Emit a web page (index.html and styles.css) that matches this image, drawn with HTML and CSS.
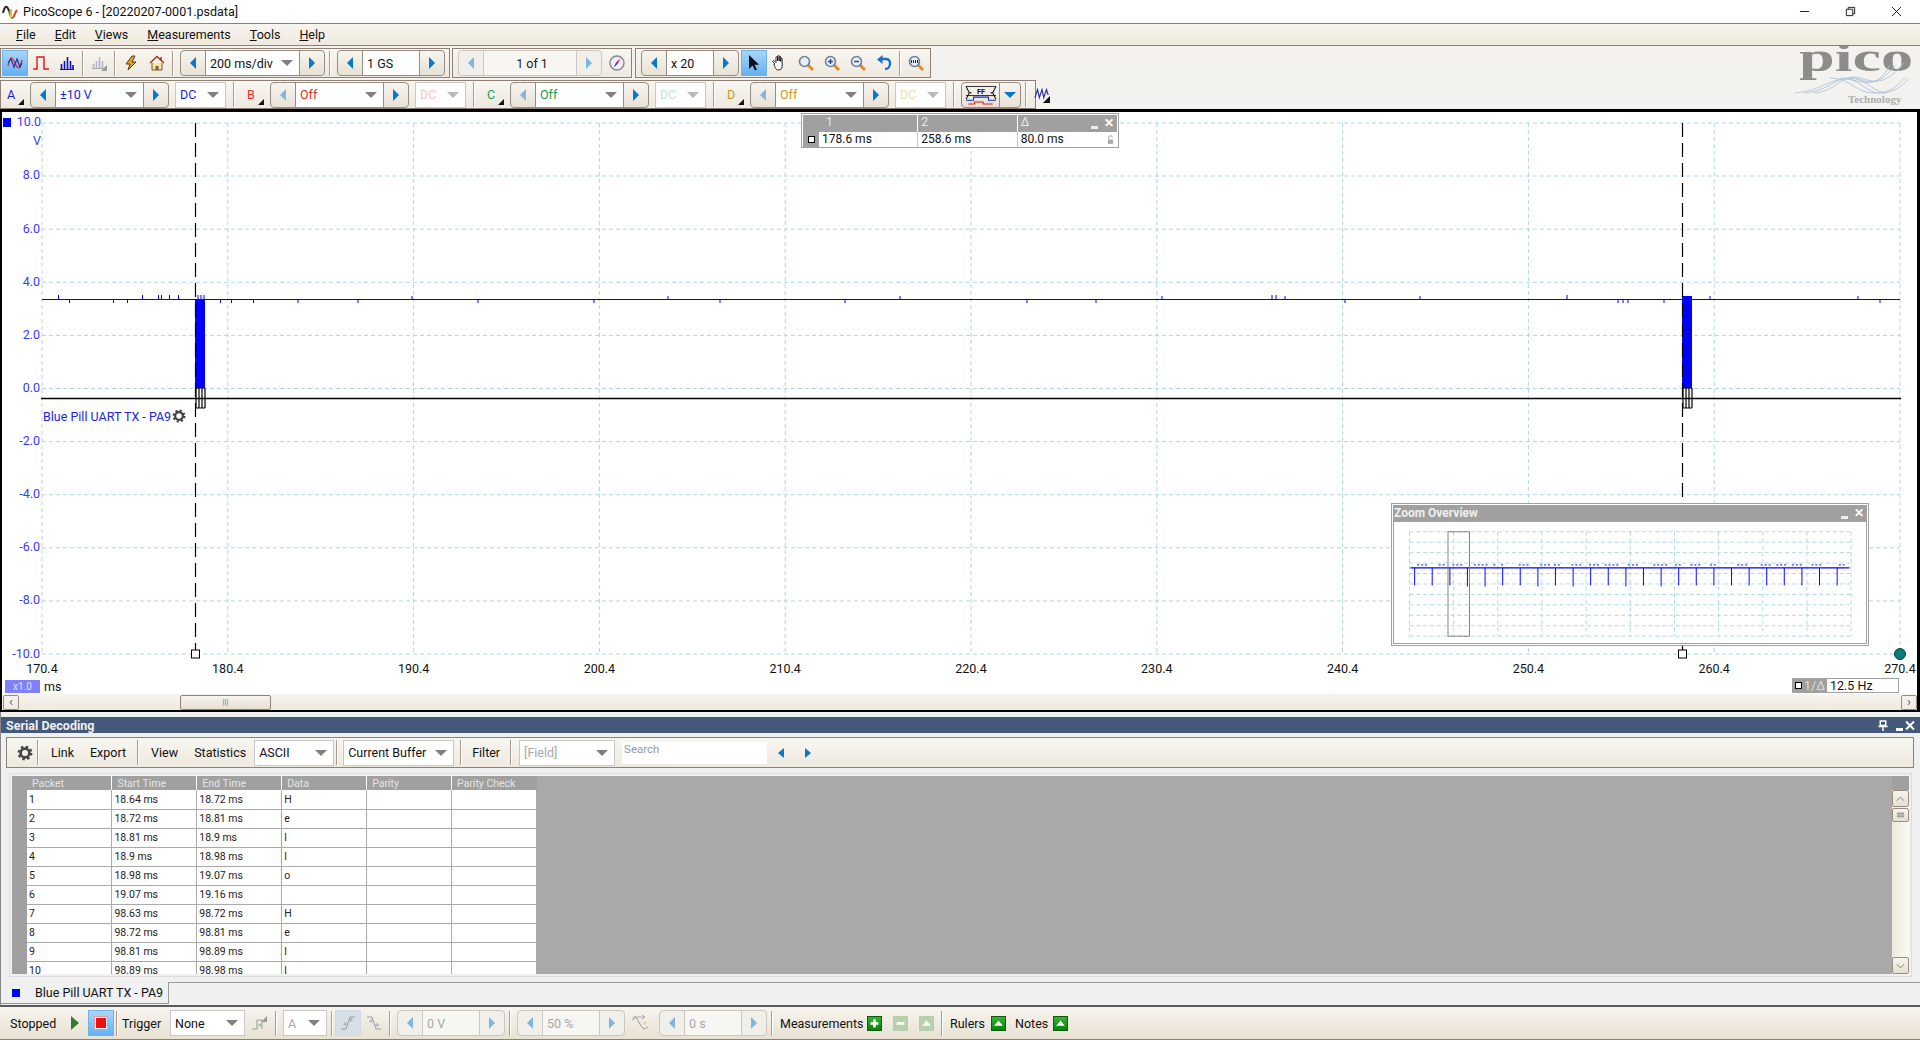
FILE: index.html
```html
<!DOCTYPE html>
<html lang="en">
<head>
  <meta charset="UTF-8">
  <title>PicoScope 6 - [20220207-0001.psdata]</title>
  <link rel="stylesheet" href="styles.css">
</head>
<body>
  <svg class="defs" width="0" height="0">
    <symbol id="gear" viewBox="0 0 16 16">
      <circle cx="8" cy="8" r="4.4" fill="none" stroke="#444" stroke-width="2.6"/>
      <circle cx="8" cy="8" r="6.2" fill="none" stroke="#444" stroke-width="2.4" stroke-dasharray="2.4 2.47"/>
    </symbol>
    <symbol id="lens" viewBox="0 0 16 16">
      <path d="M10 10l5 5" stroke="#e08a2c" stroke-width="3"/>
      <circle cx="6.5" cy="6.5" r="5" fill="#e6eef8" stroke="#6f7f96" stroke-width="1.6"/>
    </symbol>
  </svg>

  <div class="titlebar">
    <svg class="app-icon" viewBox="0 0 16 16"><path d="M1 9c2-8 4-8 6-2" fill="none" stroke="#222" stroke-width="2"/><path d="M7 7c2 7 3 8 4 6" fill="none" stroke="#2c9a34" stroke-width="2"/><path d="M11 13c2-1 2-5 4-7" fill="none" stroke="#d8432a" stroke-width="2"/><path d="M9 5v9" stroke="#e6c22c" stroke-width="2"/></svg>
    <span>PicoScope 6 - [20220207-0001.psdata]</span>
    <div class="winctl">
      <svg viewBox="0 0 12 12"><path d="M1 6h10" stroke="#111"/></svg>
      <svg viewBox="0 0 12 12"><path d="M1.5 3.5h7v7h-7zM3.5 3.5v-2h7v7h-2" fill="none" stroke="#111"/></svg>
      <svg viewBox="0 0 12 12"><path d="M1 1l10 10M11 1L1 11" stroke="#111"/></svg>
    </div>
  </div>

  <div class="menubar">
    <span><u>F</u>ile</span>
    <span><u>E</u>dit</span>
    <span><u>V</u>iews</span>
    <span><u>M</u>easurements</span>
    <span><u>T</u>ools</span>
    <span><u>H</u>elp</span>
  </div>

  <div class="bars">
    <div class="bars-left">
      <div class="row row-top">
        <div class="tb tb-a">
          <div class="btn active"><svg viewBox="0 0 16 16"><path d="M1 11C3 1 5 1 8 8s5 6 7-3" fill="none" stroke="#d8303a" stroke-width="1.4"/><path d="M1 8l3-4 3 8 3-8 3 8 2-4" fill="none" stroke="#2233aa" stroke-width="1.2"/></svg></div>
          <div class="btn"><svg viewBox="0 0 16 16"><path d="M0 14h4V2h7v12h5" fill="none" stroke="#e01818" stroke-width="1.4"/></svg></div>
          <div class="btn"><svg viewBox="0 0 16 16"><path d="M1 14.5h14" stroke="#101080"/><path d="M2.5 14V9M5.5 14V6M8.5 14V2M11.500 14V6M14 14V10" stroke="#1010c0" stroke-width="1.6"/></svg></div>
          <i class="sep"></i>
          <div class="btn"><svg viewBox="0 0 16 16"><path d="M1 13.500h13" stroke="#aaa"/><path d="M2.500 13V9M5.500 13V6M8.500 13V2M11.500 13V6" stroke="#b4b4cc" stroke-width="1.6"/><path d="M16 10v6h-6z" fill="#999"/></svg></div>
          <i class="sep"></i>
          <div class="btn"><svg viewBox="0 0 16 16"><path d="M9 1L3 9h4l-2 6 8-8H9l3-6z" fill="#e0a02a" stroke="#5a3d10"/></svg></div>
          <div class="btn"><svg viewBox="0 0 16 16"><path d="M3 8v7h10V8" fill="#f4e2a8" stroke="#6b5a2a"/><path d="M1 8l7-6.500L15 8" fill="none" stroke="#a8361c" stroke-width="1.6"/><path d="M6.500 15v-4h3v4" fill="#8a5a2a"/><path d="M12 2v3" stroke="#a8361c" stroke-width="1.600"/></svg></div>
          <i class="sep"></i>
          <div class="spin spin-wide"><b class="sb"><i class="al"></i></b><span class="val">200 ms/div<i class="caret"></i></span><b class="sb"><i class="ar"></i></b></div>
          <i class="sep"></i>
          <div class="spin spin-mid"><b class="sb"><i class="al"></i></b><span class="val">1 GS</span><b class="sb"><i class="ar"></i></b></div>
        </div>
        <div class="tb tb-b">
          <div class="spin spin-page off-look"><b class="sb"><i class="al faded"></i></b><span class="val center dark">1 of 1</span><b class="sb"><i class="ar faded"></i></b></div>
          <div class="btn"><svg viewBox="0 0 16 16"><circle cx="8" cy="8" r="7" fill="#eef" stroke="#888" stroke-width="1.400"/><path d="M11.500 3.500L8.800 8.800 7.200 7.200z" fill="#e02020"/><path d="M4.500 12.500l2.700-5.300 1.600 1.600z" fill="#2040c0"/></svg></div>
        </div>
        <div class="tb tb-c">
          <div class="spin spin-x"><b class="sb"><i class="al"></i></b><span class="val">x 20</span><b class="sb"><i class="ar"></i></b></div>
          <div class="btn active"><svg viewBox="0 0 16 16"><path d="M3 0v14l3.500-3.500 2.500 5 2-1-2.500-4.800H13z" fill="#111"/></svg></div>
          <div class="btn"><svg viewBox="0 0 16 16"><path d="M3 9L1 7c-.8-1 .6-2 1.500-1L4 7.500V2.500c0-1.200 1.500-1.200 1.500 0V6V1.500c0-1.200 1.600-1.200 1.600 0V6V2c0-1.200 1.600-1.200 1.600 0v4.500V4c0-1.200 1.500-1.200 1.500 0v7c0 2.500-1.500 4-4 4-2.300 0-3-2-4.200-6z" fill="#fff" stroke="#111" stroke-width=".9"/></svg></div>
          <div class="btn"><svg class="ic"><use href="#lens"/></svg></div>
          <div class="btn"><svg viewBox="0 0 16 16"><use href="#lens" width="16" height="16"/><path d="M4 6.500h5M6.500 4v5" stroke="#304a9c" stroke-width="1.500"/></svg></div>
          <div class="btn"><svg viewBox="0 0 16 16"><use href="#lens" width="16" height="16"/><path d="M4 6.500h5" stroke="#304a9c" stroke-width="1.500"/></svg></div>
          <div class="btn"><svg viewBox="0 0 16 16"><path d="M5 4h5c6 0 5 10-1 10" fill="none" stroke="#1c6fd0" stroke-width="2.400"/><path d="M6.500 0L1 4.500 6.500 9z" fill="#1c6fd0"/></svg></div>
          <i class="sep"></i>
          <div class="btn"><svg viewBox="0 0 16 16"><use href="#lens" width="16" height="16"/><path d="M3.500 5v3M5.500 5v3M7.500 5v3M9.500 5v3" stroke="#222"/></svg></div>
        </div>
      </div>
      <div class="row">
        <div class="tb tb-d">
          <div class="chan c-a">A<i class="corner"></i></div>
          <div class="spin spin-ch"><b class="sb"><i class="al"></i></b><span class="val c-a">±10 V<i class="caret"></i></span><b class="sb"><i class="ar"></i></b></div>
          <div class="sel sel-dc c-a">DC<i class="caret"></i></div>
          <i class="sep"></i>
          <div class="chan chan-pad c-b">B<i class="corner"></i></div>
          <div class="spin spin-ch"><b class="sb"><i class="al faded"></i></b><span class="val c-b">Off<i class="caret"></i></span><b class="sb"><i class="ar"></i></b></div>
          <div class="sel sel-dc c-b-off">DC<i class="caret faded"></i></div>
          <i class="sep"></i>
          <div class="chan chan-pad c-c">C<i class="corner"></i></div>
          <div class="spin spin-ch"><b class="sb"><i class="al faded"></i></b><span class="val c-c">Off<i class="caret"></i></span><b class="sb"><i class="ar"></i></b></div>
          <div class="sel sel-dc c-c-off">DC<i class="caret faded"></i></div>
          <i class="sep"></i>
          <div class="chan chan-pad c-d">D<i class="corner"></i></div>
          <div class="spin spin-ch"><b class="sb"><i class="al faded"></i></b><span class="val c-d">Off<i class="caret"></i></span><b class="sb"><i class="ar"></i></b></div>
          <div class="sel sel-dc c-d-off">DC<i class="caret faded"></i></div>
          <i class="sep"></i>
          <div class="spin spin-dig">
            <b class="sb sb-dig"><svg viewBox="0 0 30 18"><path d="M1 1l3 6-3 6M29 1l-3 6 3 6M4 7h2M24 7h2" fill="none" stroke="#111"/><path d="M1 1h28M1 9.500h28" stroke="#111" stroke-width=".8"/><text class="ff" x="15" y="8.500">FF</text><path d="M1 14h7v-3h14v3h7" fill="none" stroke="#1a2fd0"/><path d="M3 17.500h6v-2h8v2h9" fill="none" stroke="#e01818"/></svg></b>
            <b class="sb sb-drop"><i class="caret caret-blue"></i></b>
          </div>
          <i class="sep"></i>
          <div class="btn"><svg viewBox="0 0 18 18"><path d="M1 12L4 3l2 9 3-9 2 9 3-9 2 6" fill="none" stroke="#2a2aa0" stroke-width="1.300"/><path d="M18 10v8h-8z" fill="#111"/></svg></div>
        </div>
      </div>
    </div>
    <svg class="logo" viewBox="0 0 125 63">
      <text class="logo-pico" x="9" y="25" textLength="114" lengthAdjust="spacingAndGlyphs">pico</text>
      <g class="logo-waves">
        <path d="M5 47c25-2 35-14 50-14s30 14 45-14"/>
        <path d="M14 47c25-2 30-15 46-15s25 14 45-13"/>
        <path d="M24 47c22-2 26-16 40-16s25 16 50-14"/>
        <path d="M40 32c22 0 25 16 46 15s25-14 30-15"/>
        <path d="M50 32c22 0 25 16 42 15s25-13 27-15"/>
        <path d="M60 32c15 0 25 15 36 15"/>
      </g>
      <text class="logo-tech" x="58" y="57">Technology</text>
    </svg>
  </div>

  <div class="scope">
    <svg class="plot" viewBox="2 112 1915 582">
      <g class="grid">
        <path d="M42 123V654M227.800 123V654M413.600 123V654M599.400 123V654M785.200 123V654M971 123V654M1156.800 123V654M1342.600 123V654M1528.400 123V654M1714.200 123V654M1900 123V654"/>
        <path d="M42 123H1900M42 176H1900M42 229.200H1900M42 282.300H1900M42 335.400H1900M42 388.500H1900M42 441.600H1900M42 494.700H1900M42 547.800H1900M42 600.900H1900M42 654H1900"/>
      </g>
      <path class="baseline" d="M41 398.500H1901"/>
      <path class="trace" d="M42 299.500H1900"/>
      <path class="ticks" d="M58.500 295v4M142.500 295v4M158.500 295v4M161.500 295v4M169.500 295v4M178.500 295v4M198 295v4M201 295v4M204 295v4M69.500 300v3M113.500 300v3M127.500 300v3M220.500 300v3M231.500 300v3M253.500 300v3M298 300v3M358 300v3M412 296v3M478 300v3M594 300v3M668 296v3M720 300v3M845 300v3M900 296v3M1027 300v3M1096 300v3M1162 296v3M1272 295v4M1276 295v4M1285 296v3M1345 300v3M1420 296v3M1567 295v4M1618 300v3M1623 300v3M1628 300v3M1664 300v3M1710 296v3M1858 296v3M1880 300v3"/>
      <rect class="burst" x="195" y="299" width="10" height="89"/>
      <rect class="burst" x="1682" y="296" width="10" height="92"/>
      <path class="hatch" d="M196 388V408M199 388V408M202 388V408M205 388V408M196 388H205M196 408H205M1683 388V408M1686 388V408M1689 388V408M1692 388V408M1683 388H1692M1683 408H1692"/>
      <path class="ruler" d="M195.500 123V650M1682.500 123V502M1682.500 646V650"/>
      <rect class="ruler-end" x="191.500" y="650" width="8" height="8"/>
      <rect class="ruler-end" x="1678.500" y="650" width="8" height="8"/>
      <circle class="ref-dot" cx="1900" cy="654" r="5.500"/>
      <rect class="chan-mark" x="3" y="118" width="8" height="9"/>
      <g class="ylab">
        <text x="41" y="126">10.0</text>
        <text x="41" y="145">V</text>
        <text x="40" y="179">8.0</text>
        <text x="40" y="233">6.0</text>
        <text x="40" y="286">4.0</text>
        <text x="40" y="339">2.0</text>
        <text x="40" y="392">0.0</text>
        <text x="40" y="445">-2.0</text>
        <text x="40" y="498">-4.0</text>
        <text x="40" y="551">-6.0</text>
        <text x="40" y="604">-8.0</text>
        <text x="40" y="658">-10.0</text>
      </g>
      <g class="xlab">
        <text x="42" y="673">170.4</text>
        <text x="227.800" y="673">180.4</text>
        <text x="413.600" y="673">190.4</text>
        <text x="599.400" y="673">200.4</text>
        <text x="785.200" y="673">210.4</text>
        <text x="971" y="673">220.4</text>
        <text x="1156.800" y="673">230.4</text>
        <text x="1342.600" y="673">240.4</text>
        <text x="1528.400" y="673">250.4</text>
        <text x="1714.200" y="673">260.4</text>
        <text x="1900" y="673">270.4</text>
      </g>
      <text class="trace-name" x="43" y="421">Blue Pill UART TX - PA9</text>
      <use href="#gear" x="172" y="409" width="14" height="14"/>
      <text class="ms-lab" x="44" y="691">ms</text>
    </svg>

    <div class="x-scale">x1.0</div>
    <div class="freq"><span class="freq-k"><i class="freq-sq"></i>1/Δ</span><span class="freq-v">12.5 Hz</span></div>

    <div class="hscroll">
      <b class="sbtn">‹</b>
      <div class="thumb">|||</div>
      <b class="sbtn sbtn-end">›</b>
    </div>

    <div class="rulers-win">
      <div class="rw-head">
        <span>1</span><span>2</span><span>Δ</span>
        <i class="wmin"></i><i class="wclose">✕</i>
      </div>
      <div class="rw-body">
        <i class="rw-gut"><i class="freq-sq"></i></i>
        <span>178.6 ms</span><span>258.6 ms</span><span>80.0 ms</span>
        <svg class="lock" viewBox="0 0 8 10"><path d="M1 5h6v5H1z" fill="#aaa"/><path d="M2 5V2.500C2 0 6 0 6 2.500" fill="none" stroke="#aaa" stroke-width="1.200"/></svg>
      </div>
    </div>

    <div class="overview">
      <div class="ov-head">Zoom Overview<i class="wmin"></i><i class="wclose">✕</i></div>
      <svg class="ov-plot" viewBox="1392 521 476 124">
        <g class="grid">
          <path d="M1404 531V638M1449.300 531V638M1494.500 531V638M1539.800 531V638M1585 531V638M1630.300 531V638M1675.600 531V638M1720.800 531V638M1766.100 531V638M1811.300 531V638M1856.600 531V638"/>
          <path d="M1404 531H1857M1404 541.700H1857M1404 552.400H1857M1404 563.100H1857M1404 573.800H1857M1404 584.500H1857M1404 595.200H1857M1404 605.900H1857M1404 616.600H1857M1404 627.300H1857M1404 638H1857"/>
        </g>
        <path class="ov-trace" d="M1405 568H1855"/>
        <path class="ov-spikes" d="M1409.300 568V586M1427.300 568V586M1445.400 568V586M1463.400 568V587M1481.500 568V587M1499.500 568V586M1517.500 568V586M1535.600 568V587M1553.600 568V586M1571.700 568V587M1589.700 568V586M1607.700 568V586M1625.800 568V587M1643.800 568V586M1661.900 568V587M1679.900 568V586M1697.900 568V586M1716 568V586M1734 568V586M1752.100 568V586M1770.100 568V586M1788.100 568V586M1806.200 568V586M1824.200 568V586M1842.300 568V586"/>
        <path class="ov-ticks" d="M1412 565h12M1434 565h8M1448 565h12M1470 565h14M1490 565h4M1498 565h3M1516 565h12M1538 565h10M1552 565h6M1570 565h12M1588 565h10M1604 565h14M1628 565h10M1654 565h14M1676 565h8M1692 565h12M1712 565h8M1740 565h12M1764 565h10M1780 565h12M1796 565h12M1816 565h10M1844 565h6"/>
        <rect class="ov-sel" x="1443.500" y="531" width="22" height="107"/>
      </svg>
    </div>
  </div>

  <div class="dock">
    <div class="dock-head">
      <span>Serial Decoding</span>
      <div class="dock-ctl">
        <svg viewBox="0 0 10 12"><path d="M2 1h6v5H2zM0 7h10M5 7v5" fill="none" stroke="#fff" stroke-width="1.600"/></svg>
        <i class="wmin wmin-w"></i>
        <svg viewBox="0 0 10 10"><path d="M1 1l8 8M9 1L1 9" stroke="#fff" stroke-width="2"/></svg>
      </div>
    </div>
    <div class="dock-bar">
      <div class="dbtn dbtn-gear"><svg class="ic"><use href="#gear"/></svg></div>
      <i class="sep sep-flush"></i>
      <div class="dbtn dbtn-first">Link</div>
      <div class="dbtn">Export</div>
      <i class="sep sep-flush sep-after"></i>
      <div class="dbtn dbtn-view">View</div>
      <div class="dbtn">Statistics</div>
      <div class="sel sel-ascii">ASCII<i class="caret"></i></div>
      <i class="sep"></i>
      <div class="sel sel-buffer">Current Buffer<i class="caret"></i></div>
      <i class="sep"></i>
      <div class="dbtn dbtn-filter">Filter</div>
      <i class="sep"></i>
      <div class="sel sel-field muted">[Field]<i class="caret"></i></div>
      <div class="search">Search</div>
      <i class="al dock-arrow"></i>
      <i class="ar dock-arrow dock-arrow-next"></i>
    </div>

    <div class="panel">
      <div class="gutter"></div>
      <div class="table-wrap">
        <table class="packets">
          <thead>
            <tr><th>Packet</th><th>Start Time</th><th>End Time</th><th>Data</th><th>Parity</th><th>Parity Check</th></tr>
          </thead>
          <tbody>
            <tr><td>1</td><td>18.64 ms</td><td>18.72 ms</td><td>H</td><td></td><td></td></tr>
            <tr><td>2</td><td>18.72 ms</td><td>18.81 ms</td><td>e</td><td></td><td></td></tr>
            <tr><td>3</td><td>18.81 ms</td><td>18.9 ms</td><td>l</td><td></td><td></td></tr>
            <tr><td>4</td><td>18.9 ms</td><td>18.98 ms</td><td>l</td><td></td><td></td></tr>
            <tr><td>5</td><td>18.98 ms</td><td>19.07 ms</td><td>o</td><td></td><td></td></tr>
            <tr><td>6</td><td>19.07 ms</td><td>19.16 ms</td><td></td><td></td><td></td></tr>
            <tr><td>7</td><td>98.63 ms</td><td>98.72 ms</td><td>H</td><td></td><td></td></tr>
            <tr><td>8</td><td>98.72 ms</td><td>98.81 ms</td><td>e</td><td></td><td></td></tr>
            <tr><td>9</td><td>98.81 ms</td><td>98.89 ms</td><td>l</td><td></td><td></td></tr>
            <tr><td>10</td><td>98.89 ms</td><td>98.98 ms</td><td>l</td><td></td><td></td></tr>
          </tbody>
        </table>
      </div>
      <div class="vscroll">
        <div class="vcap"></div>
        <b class="vbtn"><svg viewBox="0 0 10 6"><path d="M1 5l4-4 4 4" fill="none" stroke="#777"/></svg></b>
        <b class="vbtn vthumb"><svg viewBox="0 0 10 6"><path d="M1 1h8M1 3h8M1 5h8" stroke="#777"/></svg></b>
        <div class="vtrack"></div>
        <b class="vbtn"><svg viewBox="0 0 10 6"><path d="M1 1l4 4 4-4" fill="none" stroke="#777"/></svg></b>
      </div>
    </div>

    <div class="tabs">
      <div class="tab"><i class="tab-sq"></i>Blue Pill UART TX - PA9</div>
      <div class="tab-rest"></div>
    </div>
  </div>

  <div class="status">
    <span class="st-stopped">Stopped</span>
    <div class="btn"><svg viewBox="0 0 16 16"><path d="M4 1l8 7-8 7z" fill="#2f7d32"/></svg></div>
    <div class="btn active"><i class="stop-sq"></i></div>
    <i class="sep"></i>
    <span class="st-trigger">Trigger</span>
    <div class="sel sel-none">None<i class="caret"></i></div>
    <div class="btn btn-gap"><svg viewBox="0 0 16 16"><path d="M0 14h5V5h5v9" fill="none" stroke="#999"/><circle cx="8" cy="10" r="1.500" fill="#9c9"/><path d="M15 1v6H9z" fill="#999"/></svg></div>
    <i class="sep"></i>
    <div class="sel sel-a muted">A<i class="caret"></i></div>
    <i class="sep"></i>
    <div class="btn active-off"><svg viewBox="0 0 16 16"><path d="M1 14h5l4-12h5" fill="none" stroke="#99a"/><path d="M3 9h4M5 7v4M9 5h4M11 3v4" stroke="#aab" /></svg></div>
    <div class="btn"><svg viewBox="0 0 16 16"><path d="M1 2h5l4 12h5" fill="none" stroke="#99a"/><path d="M3 6h4M5 4v4M9 10h4M11 8v4" stroke="#aab"/></svg></div>
    <i class="sep"></i>
    <div class="spin spin-mid off-look"><b class="sb"><i class="al faded"></i></b><span class="val muted">0 V</span><b class="sb"><i class="ar faded"></i></b></div>
    <i class="sep"></i>
    <div class="spin spin-mid off-look"><b class="sb"><i class="al faded"></i></b><span class="val muted">50 %</span><b class="sb"><i class="ar faded"></i></b></div>
    <div class="btn btn-end"><svg viewBox="0 0 16 16"><path d="M0 5l4-3 5 9 3 3 4-2" fill="none" stroke="#999"/><path d="M1 2h11M10 0l3 2-3 2" fill="none" stroke="#aab"/><path d="M13 6l2 2-2 2-2-2z" fill="#e8d890"/></svg></div>
    <div class="spin spin-mid off-look"><b class="sb"><i class="al faded"></i></b><span class="val muted">0 s</span><b class="sb"><i class="ar faded"></i></b></div>
    <i class="sep"></i>
    <span class="st-meas">Measurements</span>
    <b class="gbtn"><svg viewBox="0 0 15 15"><path d="M7.500 3v9M3 7.500h9" stroke="#fff" stroke-width="3"/></svg></b>
    <b class="gbtn gbtn-off"><svg viewBox="0 0 15 15"><path d="M3 7.500h9" stroke="#fff" stroke-width="3"/></svg></b>
    <b class="gbtn gbtn-off"><svg viewBox="0 0 15 15"><path d="M7.500 4l5 6h-10z" fill="#fff"/></svg></b>
    <i class="sep sep-after-g"></i>
    <span class="st-rulers">Rulers</span>
    <b class="gbtn"><svg viewBox="0 0 15 15"><path d="M7.500 4l5 6h-10z" fill="#fff"/></svg></b>
    <span class="st-notes">Notes</span>
    <b class="gbtn"><svg viewBox="0 0 15 15"><path d="M7.500 4l5 6h-10z" fill="#fff"/></svg></b>
  </div>
</body>
</html>
```

FILE: styles.css
```css
* {
  box-sizing: border-box;
}

body {
  margin: 0;
  width: 1920px;
  height: 1040px;
  overflow: hidden;
  display: flex;
  flex-direction: column;
  background-color: #f4f2ee;
  color: #111;
  font-family: Roboto, "Liberation Sans", sans-serif;
  font-size: 12.5px;
}

i {
  font-style: normal;
}

.defs {
  position: absolute;
}

/* window title */
.titlebar {
  height: 23px;
  display: flex;
  align-items: center;
  padding-left: 2px;
  background-color: #fff;
}

.app-icon {
  width: 16px;
  height: 16px;
  margin-right: 5px;
}

.winctl {
  margin-left: auto;
  display: flex;
  padding-right: 18px;
  gap: 35px;
}

.winctl svg {
  width: 11px;
  height: 11px;
}

/* menu */
.menubar {
  height: 23px;
  display: flex;
  align-items: center;
  gap: 19px;
  padding-left: 16px;
  border-top: 1px solid #8f7f74;
  border-bottom: 1px solid #8f7f74;
  background: linear-gradient(#f8f5f0, #efe9dd);
}

/* toolbars */
.bars {
  height: 63px;
  display: flex;
  background-color: #f4f2ee;
}

.bars-left {
  display: flex;
  flex-direction: column;
}

.row {
  display: flex;
  height: 29px;
  margin-top: 2px;
  gap: 2px;
}

.row-top {
  height: 30px;
}

.tb {
  display: flex;
  align-items: center;
  padding-left: 1px;
  border: 1px solid #8f7f74;
  background: linear-gradient(#f8f6f1, #eee9df);
}

.tb-a { width: 450px; }
.tb-b { width: 180px; }
.tb-c { width: 296px; margin-left: 1px; }
.tb-d { width: 1036px; }

.btn {
  flex: none;
  width: 26px;
  height: 26px;
  display: flex;
  align-items: center;
  justify-content: center;
}

.btn svg,
.ic {
  width: 16px;
  height: 16px;
}

.active {
  border: 1px solid #6fb2e8;
  background: linear-gradient(#a9d6fb, #64b2f4);
}

.active-off {
  border: 1px solid #cfdbe6;
  background-color: #d5dfe4;
}

.btn-gap { margin-left: 2px; }
.btn-end { margin-right: 2px; }

.sep {
  flex: none;
  width: 1px;
  height: 25px;
  margin: 0 3px 0 2px;
  background-color: #a89a8e;
  box-shadow: 1px 0 0 #fff;
}

/* spinners */
.spin {
  flex: none;
  height: 26px;
  display: flex;
  margin: 0 2px 0 4px;
  border: 1px solid #9b8c80;
  border-radius: 4px;
  overflow: hidden;
  background: linear-gradient(#f7f5f0, #e8e2d6);
}

.spin-wide { width: 145px; }
.spin-mid { width: 108px; }
.spin-page { width: 144px; }
.spin-x { width: 98px; }
.spin-ch { width: 139px; }
.spin-dig { width: 60px; margin-left: 4px; }

.off-look {
  border-color: #ccc6bd;
  background: #f1efea;
}

.sb {
  flex: none;
  width: 24px;
  display: flex;
  align-items: center;
  justify-content: center;
}

.sb-dig {
  width: 38px;
  border-right: 1px solid #9b8c80;
}

.sb-dig svg {
  width: 32px;
  height: 20px;
}

.sb-drop {
  width: 20px;
}

.ff {
  font-size: 7px;
  font-weight: 700;
  text-anchor: middle;
  fill: #111;
}

.val {
  flex: 1;
  display: flex;
  align-items: center;
  padding-left: 4px;
  background-color: #fff;
  border-left: 1px solid #9b8c80;
  border-right: 1px solid #9b8c80;
}

.off-look .val {
  background-color: #f7f6f3;
  border-color: #ccc6bd;
}

.center { justify-content: center; }
.dark { color: #222; }
.muted { color: #a8a8a8; }

.al,
.ar {
  display: block;
  width: 0;
  height: 0;
  border-top: 6px solid transparent;
  border-bottom: 6px solid transparent;
}

.al { border-right: 6px solid #0a78c8; }
.ar { border-left: 6px solid #0a78c8; }
.al.faded { border-right-color: #7db6de; }
.ar.faded { border-left-color: #7db6de; }

.caret {
  display: block;
  margin-left: auto;
  margin-right: 6px;
  width: 0;
  height: 0;
  border-left: 6px solid transparent;
  border-right: 6px solid transparent;
  border-top: 6px solid #808080;
}

.caret.faded { border-top-color: #b8b8b8; }
.caret-blue { margin: 0; border-top-color: #0a78c8; }

/* channel selectors */
.chan {
  flex: none;
  width: 24px;
  height: 26px;
  padding-left: 5px;
  display: flex;
  align-items: center;
  position: relative;
}

.chan-pad {
  width: 24px;
  margin-left: 5px;
}

.corner {
  position: absolute;
  right: 2px;
  bottom: 3px;
  border-left: 6px solid transparent;
  border-bottom: 6px solid #111;
}

.c-a { color: #1a1ae0; }
.c-b { color: #e82c2c; }
.c-c { color: #1b9a4b; }
.c-d { color: #c89a18; }
.c-b-off { color: #f5c4c4; }
.c-c-off { color: #bfe6cd; }
.c-d-off { color: #eedfae; }

.sel {
  flex: none;
  height: 26px;
  display: flex;
  align-items: center;
  padding-left: 4px;
  margin: 0 2px 0 4px;
  border: 1px solid #c8c8c8;
  background-color: #fff;
}

.sel-dc { width: 51px; margin-right: 5px; }
.sel-none { width: 75px; margin: 0; }
.sel-a { width: 44px; }
.sel-ascii { width: 80px; height: 26px; margin: 0; }
.sel-buffer { width: 111px; margin: 0 4px 0 3px; }
.sel-field { width: 96px; margin: 0 7px 0 5px; }

/* logo */
.logo {
  width: 125px;
  height: 63px;
  margin-left: auto;
  margin-right: 5px;
}

.logo-pico {
  font-family: "Liberation Serif", serif;
  font-size: 40px;
  font-weight: 700;
  fill: #8c8c8c;
}

.logo-waves path {
  fill: none;
  stroke: #a9bfd6;
  stroke-width: .8;
}

.logo-tech {
  font-family: "Liberation Serif", serif;
  font-size: 11px;
  font-weight: 700;
  fill: #adadad;
}

/* scope view */
.scope {
  position: relative;
  height: 603px;
  display: flex;
  flex-direction: column;
  border-style: solid;
  border-color: #000;
  border-width: 3px 3px 2px 2px;
  background-color: #fff;
}

.plot {
  display: block;
  width: 1915px;
  height: 582px;
  flex: none;
}

.grid path {
  fill: none;
  stroke: #add8e6;
  stroke-dasharray: 4 3;
}

.baseline { stroke: #000; stroke-width: 1.4; }
.trace { stroke: #0000ff; stroke-width: 1.2; }
.ticks { stroke: #0000ff; }
.burst { fill: #0000ff; }
.hatch { stroke: #000; stroke-width: 1.2; fill: none; }
.ruler { stroke: #000; stroke-width: 1.2; stroke-dasharray: 14 6; fill: none; }
.ruler-end { fill: #fff; stroke: #000; }
.ref-dot { fill: #0a7a7a; stroke: #044; }
.chan-mark { fill: #0000ff; }

.ylab text {
  text-anchor: end;
  fill: #3a3aff;
  font-size: 12.5px;
}

.xlab text {
  text-anchor: middle;
  fill: #111;
  font-size: 12.5px;
}

.trace-name {
  fill: #2222e8;
  font-size: 12.500px;
}

.ms-lab {
  font-size: 12.5px;
  fill: #111;
}

.x-scale {
  position: absolute;
  left: 3px;
  top: 568px;
  width: 35px;
  height: 13px;
  line-height: 13px;
  text-align: center;
  font-size: 10px;
  color: #dfe0ff;
  background-color: #7f7fff;
}

.freq {
  position: absolute;
  left: 1790px;
  top: 566px;
  width: 107px;
  height: 15px;
  display: flex;
  border: 1px solid #a0a0a0;
  background-color: #fff;
}

.freq-k {
  width: 34px;
  display: flex;
  align-items: center;
  gap: 2px;
  padding-left: 2px;
  color: #ddd;
  background-color: #a0a0a0;
}

.freq-v {
  padding-left: 3px;
  line-height: 14px;
}

.freq-sq {
  display: block;
  flex: none;
  width: 7px;
  height: 7px;
  border: 1px solid #000;
  background-color: #fff;
}

.hscroll {
  flex: 1;
  display: flex;
  align-items: center;
  position: relative;
  background: linear-gradient(#f7f4ee, #efe9dd);
}

.sbtn {
  width: 16px;
  height: 15px;
  margin-left: 1px;
  border: 1px solid #9b8c80;
  border-radius: 2px;
  font-weight: 400;
  font-size: 13px;
  line-height: 12px;
  text-align: center;
  color: #555;
}

.sbtn-end {
  margin-left: auto;
}

.thumb {
  position: absolute;
  left: 178px;
  width: 91px;
  height: 15px;
  border: 1px solid #8f7f74;
  border-radius: 2px;
  font-size: 8px;
  line-height: 12px;
  text-align: center;
  color: #777;
  background: linear-gradient(#f7f4ee, #e6dfd2);
}

/* floating windows */
.rulers-win {
  position: absolute;
  left: 799px;
  top: 1px;
  width: 318px;
  height: 35px;
  padding: 1px;
  border: 1px solid #a0a0a0;
  background-color: #fff;
  font-size: 12px;
}

.rw-head,
.rw-body {
  position: relative;
  display: flex;
  padding-left: 16px;
}

.rw-head {
  height: 17px;
  color: #e8e8e8;
  background-color: #a0a0a0;
}

.rw-body {
  height: 15px;
  line-height: 15px;
}

.rw-head span,
.rw-body span {
  width: 100px;
  padding-left: 3px;
  border-right: 1px solid #c8c8c8;
}

.rw-head span:first-child {
  padding-left: 7px;
}

.rw-head span {
  border-right-color: #fff;
}

.rw-head span:nth-of-type(3),
.rw-body span:nth-of-type(3) {
  border-right: 0;
}

.rw-gut {
  position: absolute;
  left: 0;
  top: 0;
  width: 16px;
  height: 15px;
  display: flex;
  align-items: center;
  justify-content: center;
  background-color: #a0a0a0;
}

.lock {
  position: absolute;
  right: 3px;
  top: 3px;
  width: 7px;
  height: 9px;
}

.wmin {
  position: absolute;
  right: 19px;
  bottom: 3px;
  width: 7px;
  height: 3px;
  background-color: #eee;
}

.wclose {
  position: absolute;
  right: 3px;
  top: 1px;
  font-size: 12px;
  line-height: 14px;
  font-weight: 700;
  color: #fff;
}

.overview {
  position: absolute;
  left: 1389px;
  top: 391px;
  width: 478px;
  height: 143px;
  padding: 1px;
  border: 1px solid #a0a0a0;
  background-color: #fff;
}

.ov-head {
  position: relative;
  height: 17px;
  padding-left: 1px;
  line-height: 17px;
  font-size: 12px;
  font-weight: 700;
  color: #efefef;
  background-color: #a0a0a0;
}

.ov-plot {
  display: block;
  width: 474px;
  height: 122px;
  border: 1px solid #a0a0a0;
  border-top: 0;
}

.ov-trace { stroke: #0000ff; stroke-width: 1.2; }
.ov-spikes { stroke: #0000ff; stroke-width: 1; }
.ov-ticks { stroke: #0000ff; stroke-dasharray: 2 2; fill: none; }
.ov-sel { fill: none; stroke: #808080; }

/* serial decoding panel */
.dock {
  height: 295px;
  display: flex;
  flex-direction: column;
  padding-top: 5px;
  border-left: 1px solid #888;
  border-bottom: 2px solid #5a5a5a;
  background-color: #f0f0f0;
}

.dock-head {
  flex: none;
  height: 16px;
  display: flex;
  align-items: center;
  padding-left: 5px;
  font-size: 12.5px;
  font-weight: 700;
  color: #f0f0f0;
  background-color: #44597a;
}

.dock-ctl {
  position: relative;
  margin-left: auto;
  width: 40px;
  height: 14px;
  display: flex;
  align-items: center;
  gap: 17px;
  margin-right: 2px;
}

.dock-ctl svg {
  width: 10px;
  height: 11px;
}

.wmin-w {
  right: 15px;
  bottom: 1px;
  background-color: #fff;
}

.dock-bar {
  flex: none;
  height: 31px;
  margin: 4px 6px 0 5px;
  display: flex;
  align-items: center;
  border: 1px solid #8f7f74;
  background: linear-gradient(#f8f6f1, #eee9df);
}

.dbtn {
  flex: none;
  height: 26px;
  padding: 0 8px;
  display: flex;
  align-items: center;
}

.dbtn-gear {
  width: 30px;
  padding: 0 0 0 10px;
}

.dbtn-first { margin-left: 5px; }
.dbtn-view { margin-left: 5px; }
.dbtn-filter { padding: 0 8px; }
.sep-flush { margin: 0; }
.sep-after { margin-left: 3px; }

.search {
  flex: none;
  width: 145px;
  height: 22px;
  padding-left: 2px;
  font-size: 11.5px;
  color: #999;
  background-color: #fff;
}

.dock-arrow {
  margin-left: 11px;
  border-top-width: 5px;
  border-bottom-width: 5px;
}

.dock-arrow-next {
  margin-left: 21px;
}

.panel {
  flex: none;
  height: 204px;
  margin: 5px 8px 0 8px;
  padding: 2px;
  display: flex;
  border: 1px solid #dcdcdc;
  background-color: #a9a9a9;
  background-clip: content-box;
}

.gutter {
  flex: none;
  width: 15px;
  background-color: #a0a0a0;
}

.table-wrap {
  flex: 1;
  overflow: hidden;
}

.packets {
  width: 510px;
  table-layout: fixed;
  border-collapse: collapse;
  font-size: 10.5px;
}

.packets th {
  height: 14px;
  padding: 0 0 0 5px;
  font-weight: 400;
  text-align: left;
  color: #e4e4e4;
  background-color: #a0a0a0;
  border-right: 1px solid #fff;
}

.packets th:last-child {
  border-right: 0;
}

.packets td {
  height: 19px;
  padding: 0 0 0 2px;
  background-color: #fff;
  color: #222;
  border-right: 1px solid #aaa;
  border-bottom: 1px solid #aaa;
}

.vscroll {
  flex: none;
  width: 17px;
  display: flex;
  flex-direction: column;
  background: linear-gradient(90deg, #efe9dd, #fbf9f5);
}

.vcap {
  height: 14px;
  background-color: #a0a0a0;
}

.vbtn {
  flex: none;
  height: 17px;
  display: flex;
  align-items: center;
  justify-content: center;
  border: 1px solid #9b8c80;
  border-radius: 2px;
  background: linear-gradient(#f7f4ee, #e6dfd2);
}

.vbtn svg {
  width: 9px;
  height: 6px;
}

.vthumb {
  height: 14px;
  margin-top: 1px;
}

.vtrack {
  flex: 1;
}

.tabs {
  flex: 1;
  display: flex;
  margin-top: 5px;
}

.tab {
  width: 168px;
  height: 22px;
  display: flex;
  align-items: center;
  padding-left: 11px;
  border-right: 1px solid #999;
  border-bottom: 1px solid #999;
}

.tab-sq {
  width: 8px;
  height: 8px;
  margin-right: 15px;
  background-color: #0000ff;
}

.tab-rest {
  flex: 1;
  border-top: 1px solid #999;
}

/* status bar */
.status {
  flex: 1;
  display: flex;
  align-items: center;
  border-bottom: 1px solid #8f7f74;
  background: linear-gradient(#f7f4ee, #e8e2d4);
}

.st-stopped { width: 62px; padding-left: 10px; flex: none; }
.st-trigger { width: 50px; padding-left: 2px; flex: none; }
.st-meas { width: 92px; padding-left: 5px; flex: none; }
.st-rulers { width: 46px; padding-left: 5px; flex: none; margin-left: 0; }
.st-notes { width: 47px; padding-left: 9px; flex: none; }

.stop-sq {
  display: block;
  width: 12px;
  height: 12px;
  background-color: #f01010;
  border: 1px solid #fff;
  outline: 1px solid #e0a0a0;
}

.gbtn {
  flex: none;
  width: 15px;
  height: 15px;
  margin-right: 11px;
  border: 1px solid #0c5a0c;
  background: linear-gradient(#35b235, #0c820c);
}

.gbtn + .st-rulers,
.gbtn + .st-notes {
  margin-left: -11px;
}

.gbtn svg {
  display: block;
  width: 13px;
  height: 13px;
}

.gbtn-off {
  border-color: #b8ccb0;
  background: #b5d2ac;
}

.sep-after-g {
  margin-left: -4px;
}
```
